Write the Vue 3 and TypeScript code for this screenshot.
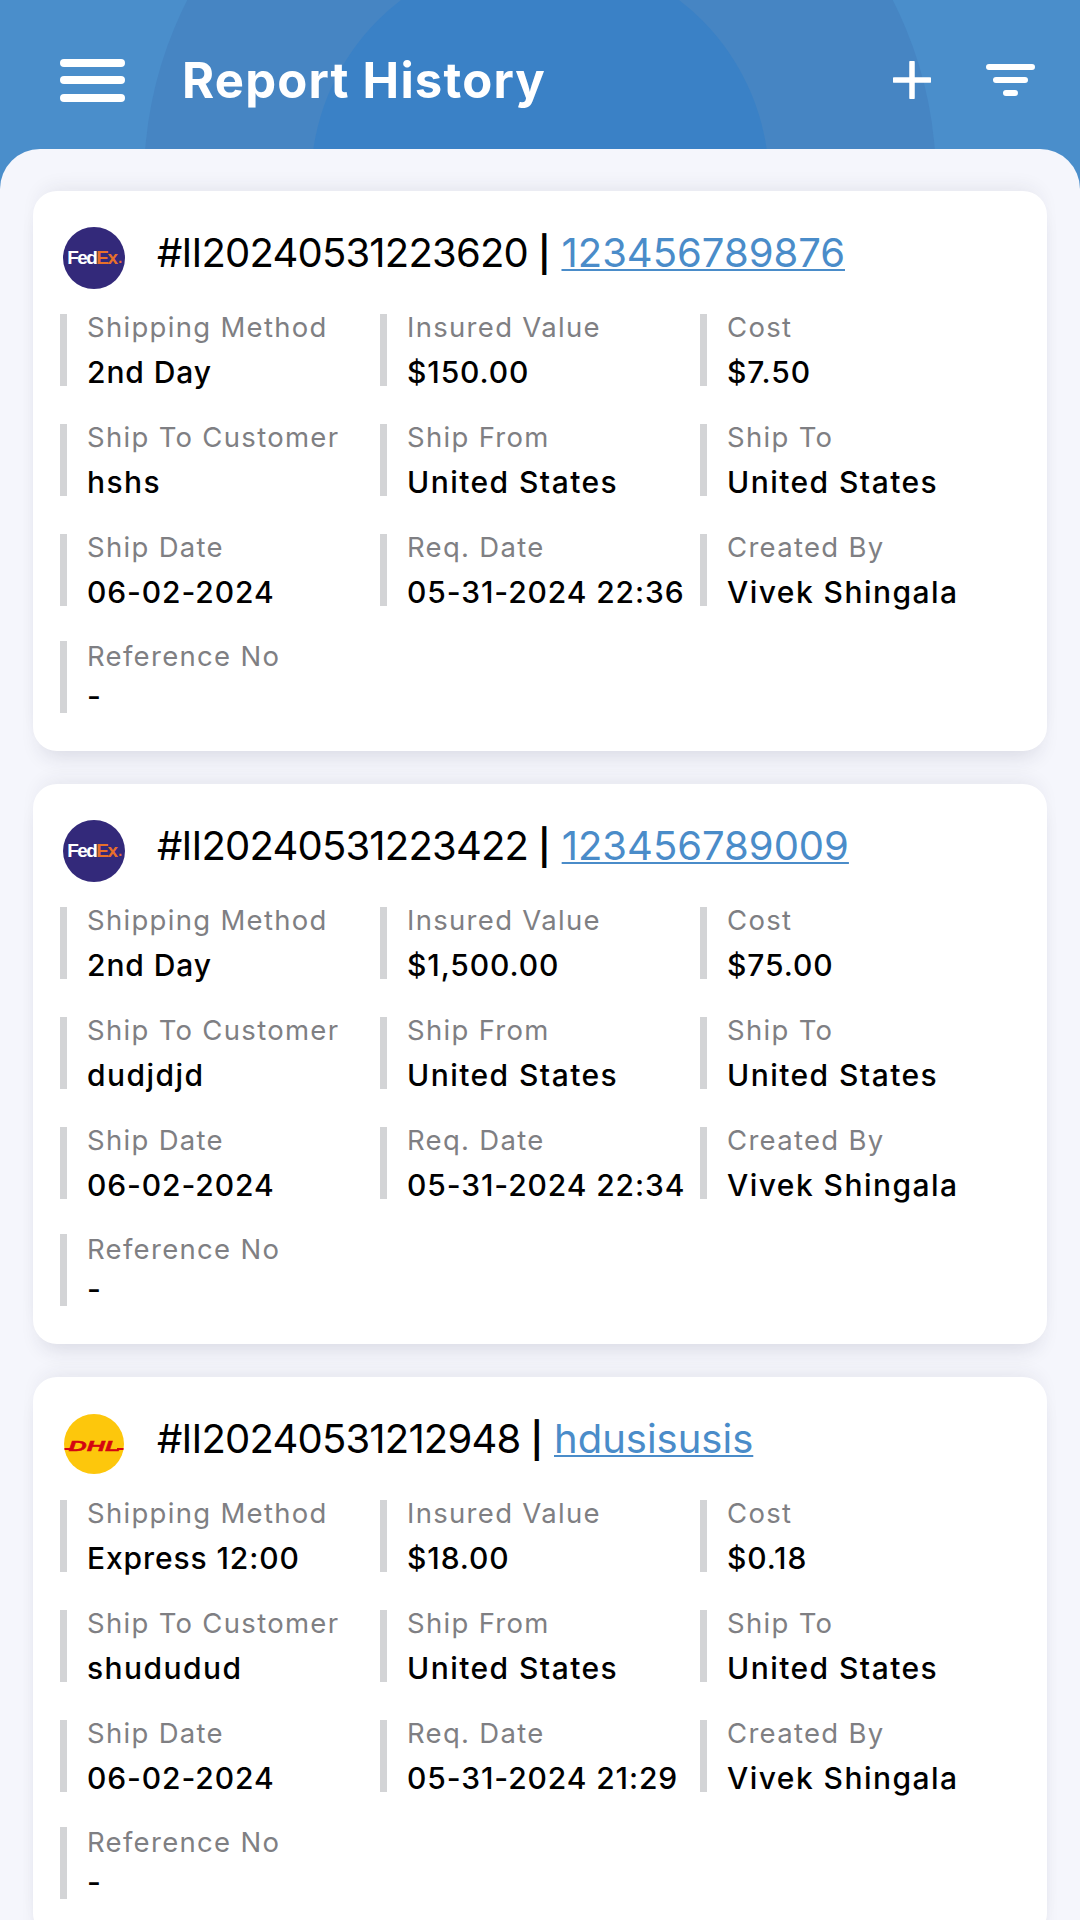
<template>
  <div class="screen">
    <header class="topbar">
      <span class="blob blob-outer"></span>
      <span class="blob blob-inner"></span>
      <button class="icon-btn menu" aria-label="Menu">
        <span></span><span></span><span></span>
      </button>
      <h1 class="page-title">Report History</h1>
      <button class="icon-btn add" aria-label="Add">
        <svg width="38" height="38" viewBox="0 0 38 38">
          <path d="M19 1.5v35M1.5 19h35" stroke="#fff" stroke-width="5.5" stroke-linecap="round" fill="none" />
        </svg>
      </button>
      <button class="icon-btn filter" aria-label="Filter">
        <svg width="49" height="32" viewBox="0 0 49 32">
          <path d="M3 3h43M10 16h29M20 29h9" stroke="#fff" stroke-width="6" stroke-linecap="round" fill="none" />
        </svg>
      </button>
    </header>

    <main class="sheet">
      <article v-for="report in reports" :key="report.id" class="card">
        <div class="card-head">
          <div v-if="report.carrier === 'fedex'" class="logo fedex">
            <span class="fed">Fed</span><span class="ex">Ex</span><span class="dot">.</span>
          </div>
          <div v-else class="logo dhl"><span>DHL</span></div>
          <div class="card-title">
            <span class="report-id">#{{ report.id }}</span>
            <span class="sep">|</span>
            <a class="tracking">{{ report.tracking }}</a>
          </div>
        </div>
        <div class="fields">
          <div
            v-for="field in fieldsOf(report)"
            :key="field.label"
            class="field"
            :class="{ 'field-last': field.label === 'Reference No' }"
          >
            <span class="label">{{ field.label }}</span>
            <span class="value" :class="{ 'value-text': !/\d/.test(field.value) }">{{ field.value }}</span>
          </div>
        </div>
      </article>
    </main>
  </div>
</template>

<script setup lang="ts">
interface Report {
  id: string;
  tracking: string;
  carrier: 'fedex' | 'dhl';
  method: string;
  insured: string;
  cost: string;
  customer: string;
  reqDate: string;
}

const reports: Report[] = [
  {
    id: 'II20240531223620',
    tracking: '123456789876',
    carrier: 'fedex',
    method: '2nd Day',
    insured: '$150.00',
    cost: '$7.50',
    customer: 'hshs',
    reqDate: '05-31-2024 22:36',
  },
  {
    id: 'II20240531223422',
    tracking: '123456789009',
    carrier: 'fedex',
    method: '2nd Day',
    insured: '$1,500.00',
    cost: '$75.00',
    customer: 'dudjdjd',
    reqDate: '05-31-2024 22:34',
  },
  {
    id: 'II20240531212948',
    tracking: 'hdusisusis',
    carrier: 'dhl',
    method: 'Express 12:00',
    insured: '$18.00',
    cost: '$0.18',
    customer: 'shududud',
    reqDate: '05-31-2024 21:29',
  },
];

const fieldsOf = (r: Report) => [
  { label: 'Shipping Method', value: r.method },
  { label: 'Insured Value', value: r.insured },
  { label: 'Cost', value: r.cost },
  { label: 'Ship To Customer', value: r.customer },
  { label: 'Ship From', value: 'United States' },
  { label: 'Ship To', value: 'United States' },
  { label: 'Ship Date', value: '06-02-2024' },
  { label: 'Req. Date', value: r.reqDate },
  { label: 'Created By', value: 'Vivek Shingala' },
  { label: 'Reference No', value: '-' },
];
</script>

<style>
html,
body {
  margin: 0;
  background: #4a8ecb;
}
</style>

<style scoped>
.screen {
  width: 1080px;
  height: 1920px;
  overflow: hidden;
  background: #4a8ecb;
  font-family: Inter, "Open Sans", sans-serif;
}

.topbar {
  position: relative;
  height: 149px;
  box-sizing: border-box;
  padding: 11px 45px 0 60px;
  display: flex;
  align-items: center;
  overflow: hidden;
  background: #4a8ecb;
}

.blob {
  position: absolute;
  border-radius: 50%;
}

.blob-outer {
  left: 144px;
  top: -216px;
  width: 792px;
  height: 792px;
  background: #4685c3;
}

.blob-inner {
  left: 311px;
  top: -47px;
  width: 458px;
  height: 458px;
  background: #3a81c6;
}

.icon-btn {
  position: relative;
  border: 0;
  padding: 0;
  background: none;
  display: flex;
}

.menu {
  width: 65px;
  height: 43px;
  flex-direction: column;
  justify-content: space-between;
}

.menu span {
  display: block;
  height: 8px;
  border-radius: 4px;
  background: #fff;
}

.page-title {
  position: relative;
  margin: 0 0 0 57px;
  flex: 1;
  color: #fff;
  font-size: 49px;
  font-weight: 700;
  letter-spacing: 1.2px;
}

.add {
  margin-right: 55px;
}

.sheet {
  height: 1771px;
  box-sizing: border-box;
  padding: 42px 33px 0;
  border-radius: 40px 40px 0 0;
  background: #f5f6fc;
  display: flex;
  flex-direction: column;
  gap: 33px;
}

.card {
  flex: none;
  height: 560px;
  box-sizing: border-box;
  padding: 36px 0 0 27px;
  border-radius: 24px;
  background: #fff;
  box-shadow: 0 -10px 20px -8px rgba(40, 40, 70, 0.09), 0 14px 20px -8px rgba(40, 40, 70, 0.13);
}

.card-head {
  display: flex;
  align-items: center;
  height: 62px;
  margin-left: 3px;
}

.logo {
  flex: none;
  width: 62px;
  height: 62px;
  border-radius: 50%;
  display: flex;
  align-items: center;
  justify-content: center;
  overflow: hidden;
  font-family: "Liberation Sans", Arial, sans-serif;
  font-weight: 700;
}

.fedex {
  background: #33297a;
  font-size: 19px;
  letter-spacing: -1.6px;
}

.fed {
  color: #fff;
}

.ex {
  color: #e8702a;
}

.dot {
  color: #e8702a;
  font-size: 14px;
  margin-left: 2px;
}

.dhl {
  position: relative;
  width: 60px;
  height: 60px;
  margin: 0 1px;
  box-sizing: border-box;
  padding-top: 3px;
  background: #fdc70c;
  color: #d40511;
  font-size: 14px;
  font-style: italic;
}

.dhl span {
  transform: scaleX(1.8);
  -webkit-text-stroke: 0.4px #d40511;
}

.dhl::before,
.dhl::after {
  content: "";
  position: absolute;
  top: 34px;
  width: 7px;
  height: 2px;
  background: #d40511;
}

.dhl::before {
  left: 0;
}

.dhl::after {
  right: 0;
}

.card-title {
  display: flex;
  align-items: baseline;
  margin-left: 32px;
  padding-bottom: 12px;
  color: #000;
  font-size: 40px;
  white-space: nowrap;
}

.report-id {
  letter-spacing: -0.8px;
}

.sep {
  margin: 0 11px 0 10px;
  font-size: 35px;
  font-weight: 600;
}

.tracking {
  color: #4a8cc9;
  text-decoration: underline;
  text-decoration-thickness: 2px;
  text-underline-offset: 2px;
}

.fields {
  margin-top: 25px;
  display: grid;
  grid-template-columns: repeat(3, 320px);
  row-gap: 38px;
}

.field {
  height: 72px;
  box-sizing: border-box;
  padding-left: 20px;
  border-left: 7px solid #d3d4d6;
  display: flex;
  flex-direction: column;
  justify-content: space-between;
  white-space: nowrap;
}

.field-last {
  margin-top: -3px;
}

.label {
  margin-top: -2px;
  color: #7f7f83;
  font-size: 27.5px;
  line-height: 30px;
  letter-spacing: 1.3px;
}

.value {
  margin-bottom: -3px;
  color: #000;
  font-size: 30px;
  line-height: 34px;
  font-weight: 450;
  letter-spacing: 0.9px;
}

.value-text {
  letter-spacing: 1.45px;
}

.field-last .label {
  margin-top: 0;
}

.field-last .value {
  margin-bottom: 0;
}
</style>
